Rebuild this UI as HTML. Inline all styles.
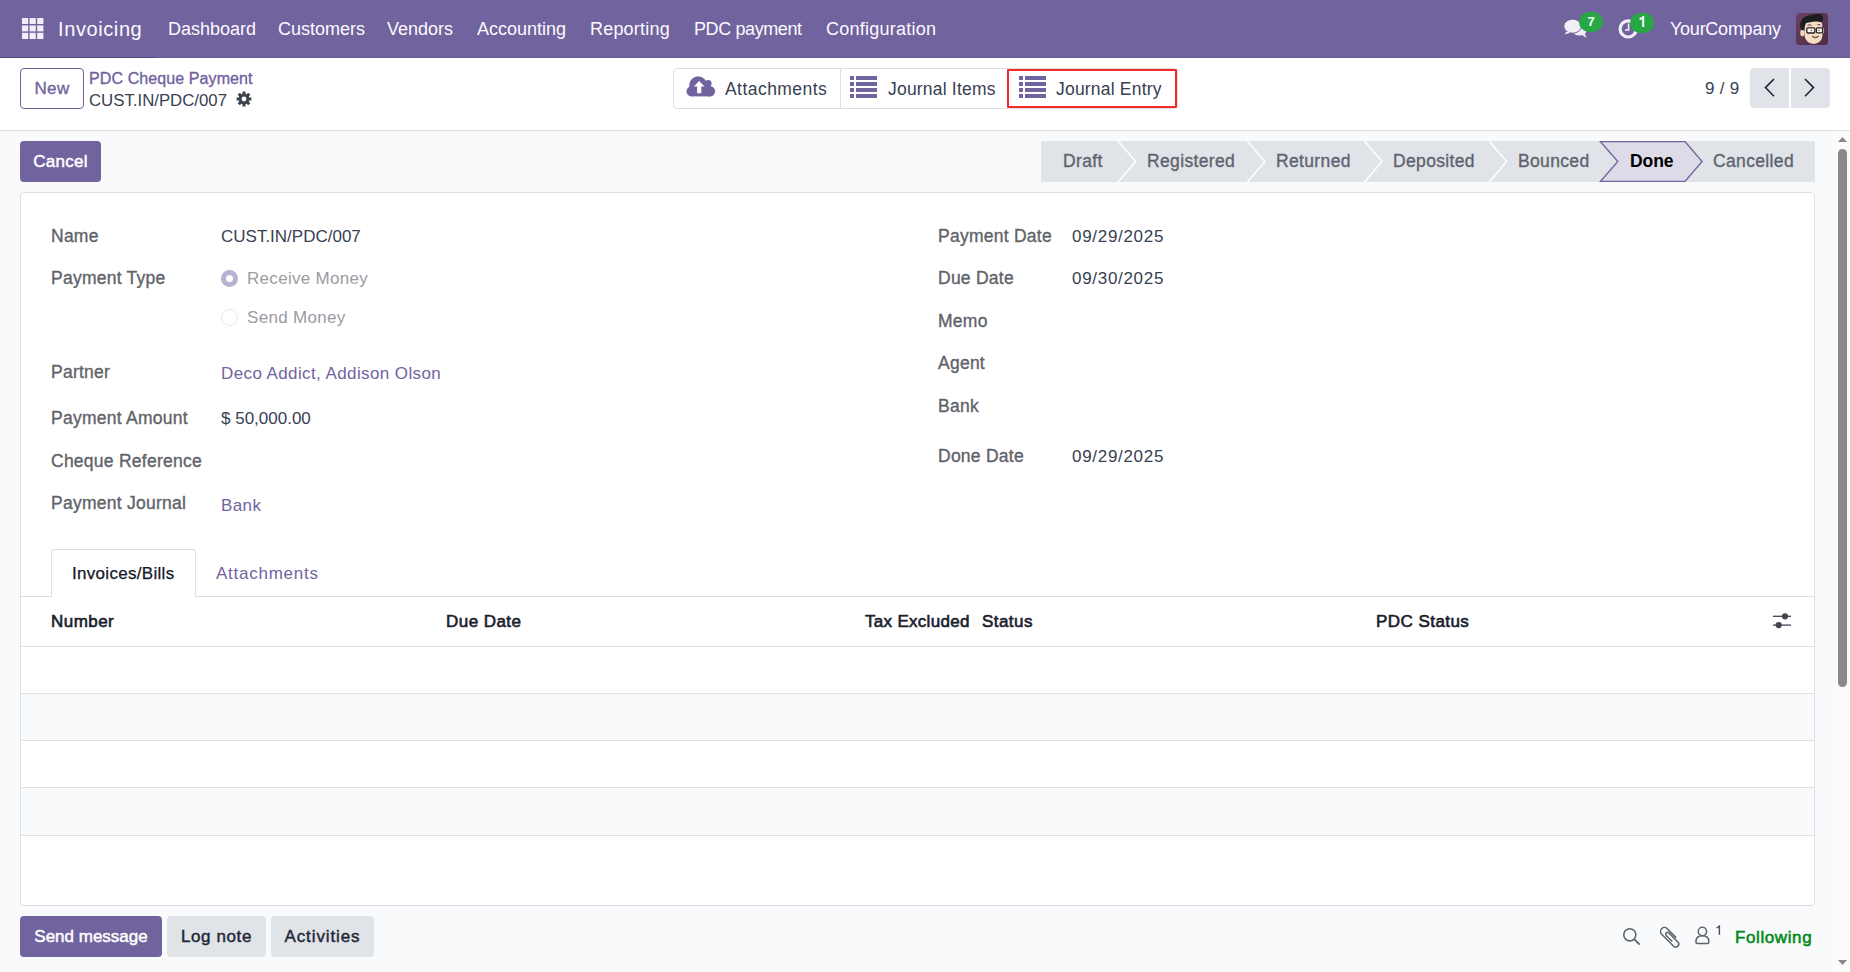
<!DOCTYPE html>
<html><head><meta charset="utf-8">
<style>
*{box-sizing:border-box;margin:0;padding:0}
html,body{width:1850px;height:972px;overflow:hidden;background:#fff;font-family:"Liberation Sans",sans-serif;color:#374151}
.abs{position:absolute;white-space:nowrap}
#nav{position:absolute;left:0;top:0;width:1850px;height:58px;background:#71639e;border-bottom:1px solid #6a5c98}
#nav .t{position:absolute;top:19px;color:#fbfaff;font-size:18px;white-space:nowrap}
#cp{position:absolute;left:0;top:58px;width:1850px;height:73px;background:#fff;border-bottom:1px solid #dce0e5}
#content{position:absolute;left:0;top:131px;width:1850px;height:841px;background:#f9fafb}
.btn{position:absolute;border-radius:4px;font-size:17px;text-align:center;white-space:nowrap}
.lbl{position:absolute;font-size:17.5px;color:#5f636a;letter-spacing:0.25px;-webkit-text-stroke:0.35px #5f636a;white-space:nowrap}
.val{position:absolute;font-size:17px;color:#374151;white-space:nowrap;margin-top:1px}
.link{color:#71639e;letter-spacing:0.4px}
.sheet{position:absolute;left:20px;top:192px;width:1795px;height:714px;background:#fff;border:1px solid #dde1e5;border-radius:4px}
.bg{position:absolute;top:68px;height:41px;border:1px solid #dce0e5;border-radius:4px;background:#fff}
.bgi{position:absolute;top:0;height:39px;font-size:17.5px;color:#374151;line-height:40px;white-space:nowrap;letter-spacing:0.2px}
.sb{position:absolute;top:10px;height:40px;background:#e0e3e7}
.st{position:absolute;font-size:17.5px;color:#5f636f;letter-spacing:0.35px;-webkit-text-stroke:0.35px #5f636f;white-space:nowrap}
.th{position:absolute;top:612px;font-size:17px;color:#1a202c;letter-spacing:0.45px;-webkit-text-stroke:0.6px #1a202c;white-space:nowrap}
.rl{position:absolute;left:21px;width:1793px;height:1px;background:#dee2e6}
</style></head><body>
<div id="nav">
  <div class="abs" style="left:0;top:57px;width:156px;height:1px;background:#54477b"></div>
  <svg class="abs" style="left:22px;top:18px" width="22" height="22" viewBox="0 0 22 22" fill="#f1eff6">
    <rect x="0" y="0" width="6.2" height="6"/><rect x="7.6" y="0" width="6.2" height="6"/><rect x="15.2" y="0" width="6.2" height="6"/>
    <rect x="0" y="7.4" width="6.2" height="6"/><rect x="7.6" y="7.4" width="6.2" height="6"/><rect x="15.2" y="7.4" width="6.2" height="6"/>
    <rect x="0" y="14.8" width="6.2" height="6.2"/><rect x="7.6" y="14.8" width="6.2" height="6.2"/><rect x="15.2" y="14.8" width="6.2" height="6.2"/>
  </svg>
  <div class="t" style="left:58px;top:17.5px;font-size:20px;letter-spacing:0.6px">Invoicing</div>
  <div class="t" style="left:168px">Dashboard</div>
  <div class="t" style="left:278px">Customers</div>
  <div class="t" style="left:387px">Vendors</div>
  <div class="t" style="left:477px">Accounting</div>
  <div class="t" style="left:590px;letter-spacing:0.2px">Reporting</div>
  <div class="t" style="left:694px;letter-spacing:-0.4px">PDC payment</div>
  <div class="t" style="left:826px;letter-spacing:0.25px">Configuration</div>
  <!-- chat icon -->
  <svg class="abs" style="left:1560px;top:16px" width="30" height="24" viewBox="0 0 30 24">
    <ellipse cx="19.5" cy="14.3" rx="7.2" ry="5.2" fill="#f1eff6"/>
    <path d="M21 18 L26.5 22 L24.5 16.5 Z" fill="#f1eff6"/>
    <ellipse cx="12.6" cy="10.2" rx="8.8" ry="7" fill="#f1eff6" stroke="#71639e" stroke-width="1"/>
    <path d="M6.5 15.5 L4.5 18.6 L10.5 16.8 Z" fill="#f1eff6"/>
  </svg>
  <div class="abs" style="left:1579px;top:12px;width:24px;height:20px;border-radius:10px;background:#28a745;color:#fff;font-size:13px;font-weight:bold;text-align:center;line-height:20px">7</div>
  <!-- clock icon -->
  <svg class="abs" style="left:1616px;top:17px" width="24" height="24" viewBox="0 0 24 24">
    <circle cx="12.2" cy="11.9" r="8.1" fill="none" stroke="#f1eff6" stroke-width="3.2"/>
    <path d="M12.6 6.5 V13 H9" fill="none" stroke="#f1eff6" stroke-width="1.6"/>
  </svg>
  <div class="abs" style="left:1630px;top:13px;width:24px;height:20px;border-radius:10px;background:#28a745"></div>
  <svg class="abs" style="left:1630px;top:13px" width="24" height="20" viewBox="0 0 24 20"><path d="M9.6 6.4 L13.2 4.2 V14" fill="none" stroke="#fff" stroke-width="2"/></svg>
  <div class="t" style="left:1670px;letter-spacing:-0.25px">YourCompany</div>
  <!-- avatar -->
  <svg class="abs" style="left:1796px;top:13px" width="32" height="32" viewBox="0 0 32 32">
    <defs><linearGradient id="ag" x1="0" y1="0" x2="1" y2="1"><stop offset="0" stop-color="#6a4262"/><stop offset="1" stop-color="#4a2a42"/></linearGradient></defs>
    <rect width="32" height="32" rx="3.5" fill="url(#ag)"/>
    <ellipse cx="6.3" cy="20" rx="2" ry="3.3" fill="#f7d9c0"/>
    <ellipse cx="26.5" cy="17.5" rx="1.6" ry="2.8" fill="#f2cfb4"/>
    <path d="M8.2 10 Q8.5 6 17 6.5 Q25.5 7 26.2 11 L26.5 22 Q26 30 18 31 Q10 30.5 8.5 23 Z" fill="#f9dcc4"/>
    <path d="M4.2 14 Q3.5 4 14 2 Q20 0.8 25 1.2 L27 3 Q27.5 7 25.8 9.3 Q20 7.5 13 9.5 L10 10 Q8.5 13 8.2 17.5 L6 17 Q4.5 16 4.2 14 Z" fill="#1c1c1e"/>
    <rect x="10.8" y="14.8" width="8" height="5.2" rx="1" fill="#fff8f0" stroke="#222" stroke-width="1.3"/>
    <rect x="20.4" y="14.8" width="6.2" height="5" rx="1" fill="#fff8f0" stroke="#222" stroke-width="1.3"/>
    <circle cx="15.3" cy="17.4" r="0.7" fill="#333"/><circle cx="23" cy="17.4" r="0.7" fill="#333"/>
    <path d="M11.5 12.3 Q13.5 11.5 15.5 12.2 M21.5 11.8 Q23 11.3 24.5 12" stroke="#3a2a26" stroke-width="0.9" fill="none"/>
    <path d="M16 23.3 Q19.5 25.5 22.8 23.2 Q19.5 26.5 16 23.3 Z" fill="#d0d0d0" stroke="#333" stroke-width="0.7"/>
  </svg>
</div>

<div id="cp">
  <div class="btn" style="left:20px;top:10px;width:64px;height:41px;border:1px solid #71639e;color:#71639e;line-height:40px;letter-spacing:0.4px;-webkit-text-stroke:0.35px #71639e">New</div>
  <div class="abs" style="left:89px;top:12px;font-size:16px;color:#71639e;letter-spacing:0.1px;-webkit-text-stroke:0.35px #71639e">PDC Cheque Payment</div>
  <div class="abs" style="left:89px;top:33px;font-size:16.8px;color:#374151">CUST.IN/PDC/007</div>
  <svg class="abs" style="left:236.3px;top:32.5px" width="16" height="16" viewBox="0 0 16 16">
    <g fill="#3d434b" transform="translate(8 8)">
      <rect x="-1.5" y="-7.4" width="3" height="14.8" rx="0.3"/>
      <rect x="-1.5" y="-7.4" width="3" height="14.8" rx="0.3" transform="rotate(45)"/>
      <rect x="-1.5" y="-7.4" width="3" height="14.8" rx="0.3" transform="rotate(90)"/>
      <rect x="-1.5" y="-7.4" width="3" height="14.8" rx="0.3" transform="rotate(135)"/>
      <circle r="5.4"/>
    </g>
    <circle cx="8" cy="8" r="2.4" fill="#fff"/>
  </svg>
</div>

<!-- button group -->
<div class="bg" style="left:673px;width:505px"></div>
<div class="abs" style="left:840px;top:69px;width:1px;height:39px;background:#dce0e5"></div>
<svg class="abs" style="left:686px;top:75px" width="30" height="24" viewBox="0 0 30 24" fill="#71639e">
  <circle cx="5.6" cy="16.4" r="5.1"/><circle cx="12.2" cy="10.3" r="9"/><circle cx="22.2" cy="8.3" r="3.4"/><circle cx="23.9" cy="16.2" r="5.2"/>
  <rect x="5.6" y="12" width="18.3" height="9.4"/><circle cx="19" cy="13" r="6"/>
  <path d="M13.2 6 L7.9 11.6 H11.1 V18.3 H15.3 V11.6 H18.5 Z" fill="#fff"/>
</svg>
<div class="bgi" style="left:725px;top:69px;letter-spacing:0.45px">Attachments</div>
<svg class="abs" style="left:850px;top:76px" width="27" height="22" viewBox="0 0 27 22" fill="#71639e">
  <rect x="0" y="0" width="4" height="4"/><rect x="6" y="0" width="21" height="4"/>
  <rect x="0" y="6" width="4" height="4"/><rect x="6" y="6" width="21" height="4"/>
  <rect x="0" y="12" width="4" height="4"/><rect x="6" y="12" width="21" height="4"/>
  <rect x="0" y="18" width="4" height="4"/><rect x="6" y="18" width="21" height="4"/>
</svg>
<div class="bgi" style="left:888px;top:69px">Journal Items</div>
<div class="abs" style="left:1007px;top:69px;width:170px;height:39px;border:2px solid #f42a2a;border-radius:1px"></div>
<svg class="abs" style="left:1019px;top:76px" width="27" height="22" viewBox="0 0 27 22" fill="#71639e">
  <rect x="0" y="0" width="4" height="4"/><rect x="6" y="0" width="21" height="4"/>
  <rect x="0" y="6" width="4" height="4"/><rect x="6" y="6" width="21" height="4"/>
  <rect x="0" y="12" width="4" height="4"/><rect x="6" y="12" width="21" height="4"/>
  <rect x="0" y="18" width="4" height="4"/><rect x="6" y="18" width="21" height="4"/>
</svg>
<div class="bgi" style="left:1056px;top:69px">Journal Entry</div>

<!-- pager -->
<div class="abs" style="left:1705px;top:79px;font-size:17px;color:#374151;letter-spacing:0.3px">9 / 9</div>
<div class="abs" style="left:1750px;top:68px;width:39px;height:40px;background:#e0e3e7;border-radius:4px 0 0 4px"></div>
<div class="abs" style="left:1791px;top:68px;width:39px;height:40px;background:#e0e3e7;border-radius:0 4px 4px 0"></div>
<svg class="abs" style="left:1762px;top:77px" width="14" height="22" viewBox="0 0 14 22"><path d="M12 2 L3.5 10.6 L12 19.2" fill="none" stroke="#1f2937" stroke-width="1.6"/></svg>
<svg class="abs" style="left:1803px;top:77px" width="14" height="22" viewBox="0 0 14 22"><path d="M2 2 L10.5 10.6 L2 19.2" fill="none" stroke="#1f2937" stroke-width="1.6"/></svg>

<div id="content"></div>
<div class="btn" style="left:20px;top:141px;width:81px;height:41px;background:#71639e;color:#fff;line-height:42px;letter-spacing:0.3px;-webkit-text-stroke:0.45px #fff">Cancel</div>

<!-- statusbar -->
<svg class="abs" style="left:1041px;top:141px" width="774" height="41" viewBox="0 0 774 41">
  <rect x="0" y="0" width="774" height="41" rx="2" fill="#e0e3e7"/>
  <g fill="none" stroke="#fff" stroke-width="1.5">
    <path d="M77.2 0 L94.7 20.5 L77.2 41"/>
    <path d="M206.3 0 L223.9 20.5 L206.3 41"/>
    <path d="M323.5 0 L341 20.5 L323.5 41"/>
    <path d="M448.1 0 L465.6 20.5 L448.1 41"/>
  </g>
  <path d="M559.3 0.5 H644 L661.1 20.5 L644 40.5 H559.3 L576.8 20.5 Z" fill="#dedbe8" stroke="#71639e" stroke-width="1.3"/>
</svg>
<div class="st" style="left:1063px;top:151px">Draft</div>
<div class="st" style="left:1147px;top:151px">Registered</div>
<div class="st" style="left:1276px;top:151px">Returned</div>
<div class="st" style="left:1393px;top:151px">Deposited</div>
<div class="st" style="left:1518px;top:151px">Bounced</div>
<div class="st" style="left:1630px;top:151px;color:#000;-webkit-text-stroke:0;font-weight:bold;letter-spacing:-0.1px">Done</div>
<div class="st" style="left:1713px;top:151px">Cancelled</div>

<div class="sheet"></div>

<!-- left fields -->
<div class="lbl" style="left:51px;top:226px">Name</div>
<div class="val" style="left:221px;top:226px">CUST.IN/PDC/007</div>
<div class="lbl" style="left:51px;top:268px">Payment Type</div>
<div class="abs" style="left:221px;top:270px;width:17px;height:17px;border-radius:50%;background:#b8b1d1"></div>
<div class="abs" style="left:226px;top:275px;width:7px;height:7px;border-radius:50%;background:#fff"></div>
<div class="val" style="left:247px;top:268px;color:#9a9ca2;letter-spacing:0.3px">Receive Money</div>
<div class="abs" style="left:221px;top:309px;width:17px;height:17px;border-radius:50%;border:1px solid #e5e7eb;background:#fff"></div>
<div class="val" style="left:247px;top:307px;color:#9a9ca2;letter-spacing:0.3px">Send Money</div>
<div class="lbl" style="left:51px;top:362px">Partner</div>
<div class="val link" style="left:221px;top:363px">Deco Addict, Addison Olson</div>
<div class="lbl" style="left:51px;top:408px">Payment Amount</div>
<div class="val" style="left:221px;top:408px">$ 50,000.00</div>
<div class="lbl" style="left:51px;top:451px">Cheque Reference</div>
<div class="lbl" style="left:51px;top:493px">Payment Journal</div>
<div class="val link" style="left:221px;top:495px">Bank</div>

<!-- right fields -->
<div class="lbl" style="left:938px;top:226px">Payment Date</div>
<div class="val" style="left:1072px;top:226px;letter-spacing:0.7px">09/29/2025</div>
<div class="lbl" style="left:938px;top:268px">Due Date</div>
<div class="val" style="left:1072px;top:268px;letter-spacing:0.7px">09/30/2025</div>
<div class="lbl" style="left:938px;top:311px">Memo</div>
<div class="lbl" style="left:938px;top:353px">Agent</div>
<div class="lbl" style="left:938px;top:396px">Bank</div>
<div class="lbl" style="left:938px;top:446px">Done Date</div>
<div class="val" style="left:1072px;top:446px;letter-spacing:0.7px">09/29/2025</div>

<!-- tabs -->
<div class="abs" style="left:21px;top:596px;width:1793px;height:1px;background:#dce0e5"></div>
<div class="abs" style="left:51px;top:549px;width:145px;height:48px;background:#fff;border:1px solid #dce0e5;border-bottom:none;border-radius:4px 4px 0 0"></div>
<div class="abs" style="left:72px;top:564px;font-size:17px;color:#111827;letter-spacing:0.3px;-webkit-text-stroke:0.25px #111827">Invoices/Bills</div>
<div class="abs" style="left:216px;top:564px;font-size:17px;color:#71639e;letter-spacing:0.75px">Attachments</div>

<!-- table -->
<div class="th" style="left:51px">Number</div>
<div class="th" style="left:446px">Due Date</div>
<div class="th" style="left:865px;letter-spacing:0.3px">Tax Excluded</div>
<div class="th" style="left:982px">Status</div>
<div class="th" style="left:1376px">PDC Status</div>
<svg class="abs" style="left:1770px;top:605px" width="24" height="28" viewBox="0 0 24 28" fill="#40454f">
  <rect x="3" y="10.65" width="18" height="1.3"/><rect x="3" y="19.45" width="18" height="1.3"/>
  <circle cx="15" cy="11.3" r="3.1"/><circle cx="8.75" cy="20.1" r="3.1"/>
</svg>
<div class="rl" style="top:646px"></div>
<div class="abs" style="left:21px;top:694px;width:1793px;height:46px;background:#f9fafb"></div>
<div class="abs" style="left:21px;top:788px;width:1793px;height:47px;background:#f9fafb"></div>
<div class="rl" style="top:693px"></div>
<div class="rl" style="top:740px"></div>
<div class="rl" style="top:787px"></div>
<div class="rl" style="top:835px"></div>

<!-- chatter -->
<div class="btn" style="left:20px;top:916px;width:142px;height:41px;background:#71639e;color:#fff;line-height:42px;-webkit-text-stroke:0.45px #fff">Send message</div>
<div class="btn" style="left:167px;top:916px;width:99px;height:41px;background:#e0e3e7;color:#1f2937;line-height:42px;letter-spacing:0.6px;-webkit-text-stroke:0.45px #1f2937">Log note</div>
<div class="btn" style="left:271px;top:916px;width:103px;height:41px;background:#e0e3e7;color:#1f2937;line-height:42px;letter-spacing:0.9px;-webkit-text-stroke:0.45px #1f2937">Activities</div>

<svg class="abs" style="left:1610px;top:915px" width="120" height="45" viewBox="0 0 120 45" fill="none" stroke="#5f636b">
  <circle cx="19.8" cy="19.8" r="6.05" stroke-width="1.6"/>
  <path d="M24.2 24.2 L29.6 29.6" stroke-width="1.9"/>
  <g transform="translate(45.5 8)" stroke-width="1.5">
    <path d="M20.7 14.6 L11.74 5.66 A3.95 3.95 0 0 0 6.15 11.24 L18.17 23.26 A3 3 0 0 0 22.41 19.02 L13.29 9.9 A1.83 1.83 0 0 0 10.7 12.49 L16.71 18.5"/>
  </g>
  <circle cx="92.4" cy="16.5" r="4.15" stroke-width="1.5"/>
  <path d="M86 26.5 C86 22.5 88.5 20.8 92.4 20.8 C96.3 20.8 98.8 22.5 98.8 26.5 L98.8 27.3 Q98.8 28.5 97.5 28.5 L87.3 28.5 Q86 28.5 86 27.3 Z" stroke-width="1.5"/>
  <path d="M106.6 13 L109.4 11.1 L109.4 19.8" stroke-width="1.4" stroke="#4b5058"/>
</svg>
<div class="abs" style="left:1735px;top:928px;font-size:17px;color:#008818;letter-spacing:0.6px;-webkit-text-stroke:0.55px #008818">Following</div>

<!-- scrollbar -->
<div class="abs" style="left:1835px;top:131px;width:15px;height:841px;background:#fbfbfb"></div>
<div class="abs" style="left:1838px;top:149px;width:9px;height:538px;background:#888;border-radius:4.5px"></div>
<svg class="abs" style="left:1837px;top:136px" width="11" height="7" viewBox="0 0 11 7"><path d="M1 6 L5.5 1 L10 6 Z" fill="#888"/></svg>
<svg class="abs" style="left:1837px;top:959px" width="11" height="7" viewBox="0 0 11 7"><path d="M1 1 L5.5 6 L10 1 Z" fill="#888"/></svg>
</body></html>
